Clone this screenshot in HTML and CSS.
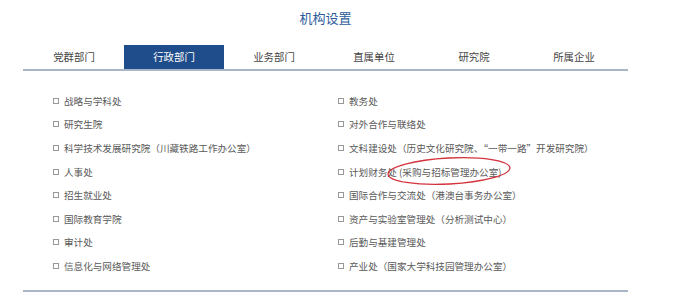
FILE: index.html
```html
<!DOCTYPE html>
<html lang="zh-CN">
<head>
<meta charset="utf-8">
<title>机构设置</title>
<link rel="stylesheet" href="styles.css">
</head>
<body>
<div class="wrap">
  <h1 class="title">机构设置</h1>
  <ul class="tabs">
    <li class="tab">党群部门</li>
    <li class="tab active">行政部门</li>
    <li class="tab">业务部门</li>
    <li class="tab">直属单位</li>
    <li class="tab">研究院</li>
    <li class="tab">所属企业</li>
  </ul>
  <div class="lists">
    <ul class="col col-left">
      <li class="item">战略与学科处</li>
      <li class="item">研究生院</li>
      <li class="item">科学技术发展研究院（川藏铁路工作办公室）</li>
      <li class="item">人事处</li>
      <li class="item">招生就业处</li>
      <li class="item">国际教育学院</li>
      <li class="item">审计处</li>
      <li class="item">信息化与网络管理处</li>
    </ul>
    <ul class="col col-right">
      <li class="item">教务处</li>
      <li class="item">对外合作与联络处</li>
      <li class="item">文科建设处（历史文化研究院、“一带一路”开发研究院）</li>
      <li class="item marked">计划财务处 (采购与招标管理办公室)
        <svg class="ring" width="130" height="34" viewBox="0 0 130 34" aria-hidden="true">
          <ellipse cx="64" cy="16" rx="61" ry="13" transform="rotate(-3 64 16)" fill="none" stroke="#d4323c" stroke-width="1.3"/>
        </svg>
      </li>
      <li class="item">国际合作与交流处（港澳台事务办公室）</li>
      <li class="item">资产与实验室管理处（分析测试中心）</li>
      <li class="item">后勤与基建管理处</li>
      <li class="item">产业处（国家大学科技园管理办公室）</li>
    </ul>
  </div>
</div>
</body>
</html>
```

FILE: styles.css
```css
* { box-sizing: border-box; }
html, body { margin: 0; padding: 0; background: #fff; }
body {
  width: 692px;
  font-family: "Noto Sans CJK SC", "Noto Sans", sans-serif;
  color: #555;
}
.wrap {
  margin-left: 23px;
  width: 605px;
  border-bottom: 2px solid #a9b6c7;
  padding-bottom: 12px;
}
.title {
  margin: 8px 0 0;
  height: 20px;
  line-height: 20px;
  font-size: 13px;
  font-weight: normal;
  text-align: center;
  color: #2e5c9c;
}
.tabs {
  list-style: none;
  margin: 17px 0 0;
  padding: 0 0 0 1px;
  display: flex;
  border-bottom: 2px solid #a9b6c7;
}
.tab {
  width: 100px;
  height: 24px;
  line-height: 24px;
  text-align: center;
  font-size: 10.4px;
  color: #444;
}
.tab.active {
  background: #1f4d8b;
  color: #fff;
}
.lists {
  display: flex;
  padding: 18px 0 0 30px;
}
.col {
  list-style: none;
  margin: 0;
  padding: 0;
}
.col-left { width: 285px; }
.col-right { flex: 1; }
.item {
  position: relative;
  display: flex;
  align-items: center;
  height: 23.6px;
  font-size: 9.6px;
  color: #5a5a5a;
  white-space: nowrap;
}
.item::before {
  content: "";
  width: 4px;
  height: 4px;
  border: 1px solid #999;
  margin-right: 5px;
  flex: none;
}
.ring {
  position: absolute;
  left: 47px;
  top: -5px;
}
```
